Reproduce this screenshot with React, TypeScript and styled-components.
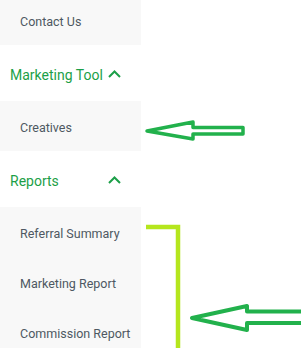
import styled, { createGlobalStyle } from "styled-components";

const GlobalStyle = createGlobalStyle`
  body {
    margin: 0;
    background: #ffffff;
    font-family: Roboto, "Liberation Sans", sans-serif;
  }
`;

const Page = styled.div`
  position: relative;
  width: 301px;
  height: 348px;
  overflow: hidden;
  background: #ffffff;
`;

const Sidebar = styled.nav`
  width: 141px;
  margin-top: -5px;
  display: flex;
  flex-direction: column;
`;

const Item = styled.a`
  display: flex;
  align-items: center;
  height: 50px;
  padding: 2px 0 0 20px;
  box-sizing: border-box;
  background: #f8f8f8;
  color: #4e5862;
  font-size: 12.5px;
  text-decoration: none;
`;

const Group = styled.div`
  display: flex;
  flex-direction: column;
`;

const Heading = styled.div`
  display: flex;
  align-items: center;
  justify-content: space-between;
  height: 56px;
  padding: 3px 20px 0 10px;
  box-sizing: border-box;
  background: #ffffff;
  color: #1c9f48;
  font-size: 14px;
`;

const Chevron = styled.svg`
  width: 13px;
  height: 8px;
  margin-top: -2px;
`;

// hand-drawn marks lying over the screenshot
const Marks = styled.svg`
  position: absolute;
  inset: 0;
  pointer-events: none;
`;

function Up() {
  return (
    <Chevron viewBox="0 0 13 8">
      <polyline
        points="1,7 6.5,1.5 12,7"
        fill="none"
        stroke="#1c9f48"
        strokeWidth="2"
      />
    </Chevron>
  );
}

function App() {
  return (
    <Page>
      <GlobalStyle />
      <Sidebar>
        <Item>Contact Us</Item>
        <Group>
          <Heading>
            Marketing Tool <Up />
          </Heading>
          <Item>Creatives</Item>
        </Group>
        <Group>
          <Heading>
            Reports <Up />
          </Heading>
          <Item>Referral Summary</Item>
          <Item>Marketing Report</Item>
          <Item>Commission Report</Item>
        </Group>
      </Sidebar>
      <Marks width="301" height="348" viewBox="0 0 301 348">
        <polygon
          points="147,131 193,122 193,127.5 243,127.5 243,134 193,134 193,139"
          fill="none"
          stroke="#22b14c"
          strokeWidth="3.5"
          strokeLinejoin="round"
        />
        <polyline
          points="146,227 178,227 178,350"
          fill="none"
          stroke="#b5e61d"
          strokeWidth="4.5"
        />
        <polygon
          points="192,318 247,306 247,311.5 306,311.5 306,323 247,323 247,330"
          fill="none"
          stroke="#22b14c"
          strokeWidth="4"
          strokeLinejoin="round"
        />
      </Marks>
    </Page>
  );
}

export default App;
